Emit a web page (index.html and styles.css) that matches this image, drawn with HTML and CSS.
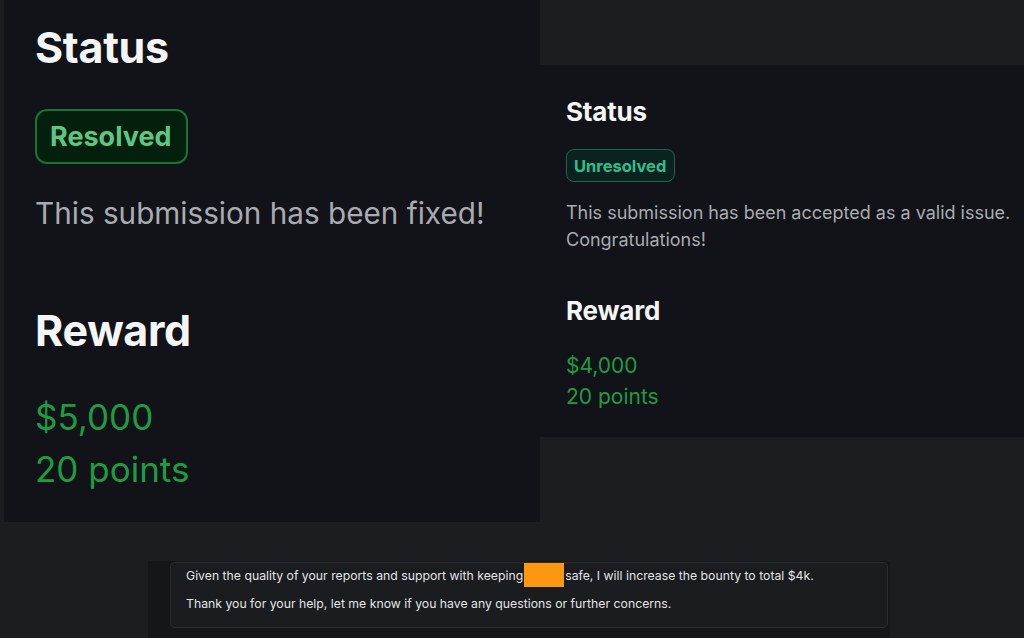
FILE: index.html
```html
<!DOCTYPE html>
<html lang="en">
<head>
<meta charset="utf-8">
<title>Submission status</title>
<link rel="stylesheet" href="styles.css">
</head>
<body>
<div class="top">
  <section class="panel panel-big">
    <h2 class="title">Status</h2>
    <span class="badge badge-resolved">Resolved</span>
    <p class="desc">This submission has been fixed!</p>
    <h2 class="title title-reward">Reward</h2>
    <div class="money">$5,000</div>
    <div class="money">20 points</div>
  </section>
  <div class="side">
    <div class="side-gap"></div>
    <section class="panel panel-small">
      <h2 class="title">Status</h2>
      <span class="badge badge-unresolved">Unresolved</span>
      <p class="desc">This submission has been accepted as a valid issue.<br>Congratulations!</p>
      <h2 class="title title-reward">Reward</h2>
      <div class="money">$4,000</div>
      <div class="money">20 points</div>
    </section>
  </div>
</div>
<div class="bottom">
  <div class="msg-wrap">
    <div class="msg">
      <p class="msg-line">Given the quality of your reports and support with keeping<span class="redact"></span>safe, I will increase the bounty to total $4k.</p>
      <p class="msg-line">Thank you for your help, let me know if you have any questions or further concerns.</p>
    </div>
  </div>
</div>
</body>
</html>
```
FILE: styles.css
```css
* { box-sizing: border-box; }
html, body { margin: 0; padding: 0; }
body {
  width: 1024px;
  height: 638px;
  overflow: hidden;
  background: #1c1d21;
  font-family: Inter, "Noto Sans", sans-serif;
}
.top {
  display: flex;
  align-items: flex-start;
}
.panel {
  background: #111318;
  display: flex;
  flex-direction: column;
  align-items: flex-start;
}
.panel-big {
  margin-left: 4px;
  width: 536px;
  height: 522px;
  padding: 21px 0 0 31px;
}
.side {
  flex: 1;
  display: flex;
  flex-direction: column;
}
.side-gap { height: 65px; }
.panel-small {
  height: 372px;
  padding: 31px 0 0 26px;
}
.title {
  margin: 0;
  color: #f4f5f7;
  font-weight: 700;
}
.panel-big .title { font-size: 43px; line-height: 52px; letter-spacing: -0.3px; }
.panel-small .title { font-size: 26px; line-height: 32px; letter-spacing: -0.2px; }

.badge { display: inline-block; font-weight: 700; }
.badge-resolved {
  margin-top: 36px;
  font-size: 27px;
  line-height: 29px;
  padding: 11px 14px 11px 13px;
  border: 2px solid #1c7236;
  border-radius: 12px;
  background: #03200d;
  color: #62c483;
}
.badge-unresolved {
  margin-top: 21px;
  font-size: 16.5px;
  line-height: 18px;
  padding: 7px 8px 6px 7px;
  border: 1.5px solid #1d6350;
  border-radius: 8px;
  background: #0b231e;
  color: #2fbf8d;
}
.desc { margin: 0; color: #a9abb0; }
.panel-big .desc { font-size: 29.7px; line-height: 44px; margin-top: 27px; }
.panel-small .desc { font-size: 18px; line-height: 27px; margin-top: 17px; }
.panel-big .title-reward { margin-top: 69px; }
.panel-small .title-reward { margin-top: 42px; }
.money { color: #1f9c42; }
.panel-big .money { font-size: 35px; line-height: 52px; }
.panel-big .title-reward + .money { margin-top: 35px; }
.panel-small .money { font-size: 21px; line-height: 31px; }
.panel-small .title-reward + .money { margin-top: 23px; }

.bottom {
  margin-top: 39px;
  padding-left: 148px;
}
.msg-wrap {
  width: 742px;
  height: 77px;
  background: #141619;
  padding: 1px 2px 0 22px;
}
.msg {
  height: 66px;
  background: #1a1c20;
  border: 1px solid #2b2d32;
  border-radius: 5px;
  padding: 0 0 0 15px;
}
.msg-line {
  margin: 0;
  font-size: 12.25px;
  line-height: 16px;
  color: #e2e3e5;
}
.msg-line + .msg-line { margin-top: 9px; }
.redact {
  display: inline-block;
  width: 40px;
  height: 24px;
  background: #fb9810;
  vertical-align: -7px;
  margin: 0 1px 0 1px;
}
```
